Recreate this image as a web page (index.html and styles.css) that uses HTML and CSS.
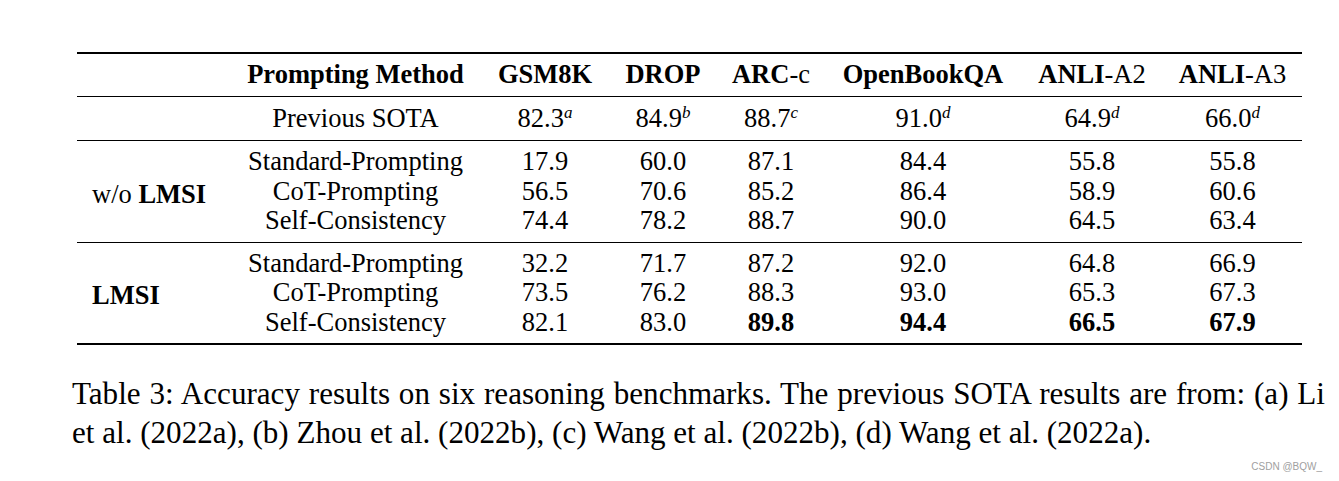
FILE: index.html
```html
<!DOCTYPE html>
<html>
<head>
<meta charset="utf-8">
<link rel="stylesheet" href="styles.css">
</head>
<body>
<div class="page">
  <table class="results">
    <colgroup>
      <col class="c-group">
      <col class="c-method">
      <col class="c-gsm">
      <col class="c-drop">
      <col class="c-arc">
      <col class="c-obqa">
      <col class="c-a2">
      <col class="c-a3">
    </colgroup>
    <thead>
      <tr class="head">
        <th></th>
        <th>Prompting Method</th>
        <th>GSM8K</th>
        <th>DROP</th>
        <th>ARC<span class="normal">-c</span></th>
        <th>OpenBookQA</th>
        <th>ANLI<span class="normal">-A2</span></th>
        <th>ANLI<span class="normal">-A3</span></th>
      </tr>
    </thead>
    <tbody class="sota">
      <tr>
        <td></td>
        <td>Previous SOTA</td>
        <td>82.3<sup>a</sup></td>
        <td>84.9<sup>b</sup></td>
        <td>88.7<sup>c</sup></td>
        <td>91.0<sup>d</sup></td>
        <td>64.9<sup>d</sup></td>
        <td>66.0<sup>d</sup></td>
      </tr>
    </tbody>
    <tbody class="group">
      <tr class="first">
        <td class="label" rowspan="3">w/o <b>LMSI</b></td>
        <td>Standard-Prompting</td>
        <td>17.9</td><td>60.0</td><td>87.1</td><td>84.4</td><td>55.8</td><td>55.8</td>
      </tr>
      <tr>
        <td>CoT-Prompting</td>
        <td>56.5</td><td>70.6</td><td>85.2</td><td>86.4</td><td>58.9</td><td>60.6</td>
      </tr>
      <tr class="last">
        <td>Self-Consistency</td>
        <td>74.4</td><td>78.2</td><td>88.7</td><td>90.0</td><td>64.5</td><td>63.4</td>
      </tr>
    </tbody>
    <tbody class="group final">
      <tr class="first">
        <td class="label" rowspan="3"><b>LMSI</b></td>
        <td>Standard-Prompting</td>
        <td>32.2</td><td>71.7</td><td>87.2</td><td>92.0</td><td>64.8</td><td>66.9</td>
      </tr>
      <tr>
        <td>CoT-Prompting</td>
        <td>73.5</td><td>76.2</td><td>88.3</td><td>93.0</td><td>65.3</td><td>67.3</td>
      </tr>
      <tr class="last">
        <td>Self-Consistency</td>
        <td>82.1</td><td>83.0</td><td><b>89.8</b></td><td><b>94.4</b></td><td><b>66.5</b></td><td><b>67.9</b></td>
      </tr>
    </tbody>
  </table>
  <p class="caption">Table 3: Accuracy results on six reasoning benchmarks. The previous SOTA results are from: (a) Li et al. (2022a), (b) Zhou et al. (2022b), (c) Wang et al. (2022b), (d) Wang et al. (2022a).</p>
  <div class="watermark">CSDN @BQW_</div>
</div>
</body>
</html>
```

FILE: styles.css
```css
html, body {
  margin: 0;
  padding: 0;
  background: #ffffff;
}

.page {
  position: relative;
  width: 1339px;
  height: 481px;
  padding-top: 52px;
  box-sizing: border-box;
  font-family: "Liberation Serif", "Times New Roman", serif;
  color: #000;
}

.results {
  margin-left: 77px;
  width: 1225px;
  table-layout: fixed;
  border-collapse: collapse;
  font-size: 26.5px;
  border-top: 2px solid #000;
  border-bottom: 2px solid #000;
}

.c-group { width: 153px; }
.c-method { width: 251px; }
.c-gsm { width: 128px; }
.c-drop { width: 108px; }
.c-arc { width: 108px; }
.c-obqa { width: 196px; }
.c-a2 { width: 142px; }
.c-a3 { width: 139px; }

.results th,
.results td {
  padding: 0;
  text-align: center;
  white-space: nowrap;
  line-height: 29.5px;
}

.head th {
  height: 42px;
  font-weight: bold;
  vertical-align: middle;
}

.head .normal {
  font-weight: normal;
}

.results thead {
  border-bottom: 1px solid #000;
}

.sota td {
  height: 43px;
  vertical-align: middle;
}

.sota {
  border-bottom: 1px solid #000;
}

.results sup {
  font-style: italic;
  font-size: 17px;
  line-height: 0;
  vertical-align: 9px;
}

.group .first td {
  padding-top: 6px;
}

.group .last td {
  padding-bottom: 6px;
}

.group .label {
  text-align: left;
  padding: 0 0 0 15px;
  vertical-align: middle;
}

.group.final {
  border-top: 1px solid #000;
}

.caption {
  margin: 29px 0 0 72px;
  width: 1253px;
  font-size: 31.1px;
  line-height: 39px;
  text-align: justify;
}

.watermark {
  position: absolute;
  right: 17px;
  bottom: 9px;
  font-family: "Liberation Sans", Arial, sans-serif;
  font-size: 10px;
  color: #a0a0a0;
}
```
